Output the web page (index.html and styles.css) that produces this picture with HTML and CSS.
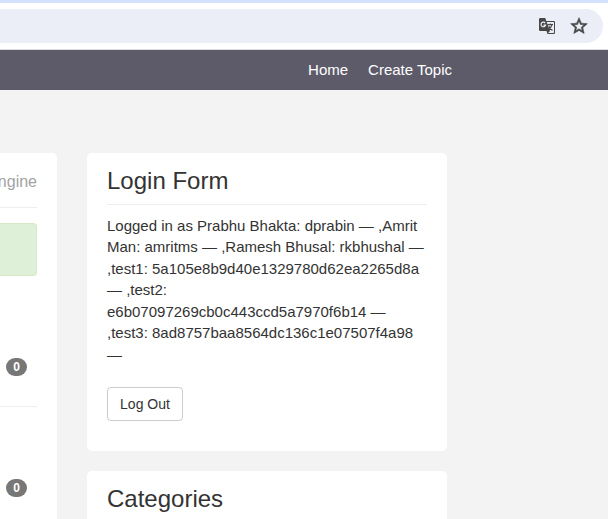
FILE: index.html
```html
<!DOCTYPE html>
<html lang="en">
<head>
<meta charset="utf-8">
<title>Forum</title>
<link rel="stylesheet" href="styles.css">
</head>
<body>
<div class="browser">
  <div class="omnibox">
    <svg class="icon" width="18" height="18" viewBox="0 0 18 18">
      <path d="M2.2 1H7.3L8.3 4H15.8Q17 4 17 5.2V15.8Q17 17 15.8 17H9.5L8.5 14H2.2Q1 14 1 12.8V2.2Q1 1 2.2 1Z" fill="#474747"/>
      <path d="M8.7 5H15.2Q16 5 16 5.8V15.2Q16 16 15.2 16H10.1L12 14Z" fill="#ebeef7"/>
      <path d="M7.2 6.1A2.3 2.3 0 1 0 7.5 8.2H5.5" fill="none" stroke="#ebeef7" stroke-width="1.2"/>
      <path d="M9.5 7.6H15M12.3 6.4V7.6M14 7.6Q13 11 10.8 12.5M11 9.2Q12 11.4 14.4 13.5" fill="none" stroke="#474747" stroke-width="1.1"/>
    </svg>
    <svg class="icon" width="20" height="20" viewBox="0 0 24 24">
      <path d="M22 9.24l-7.19-.62L12 2 9.19 8.63 2 9.24l5.46 4.73L5.82 21 12 17.27 18.18 21l-1.63-7.03L22 9.24zM12 15.4l-3.76 2.27 1-4.28-3.32-2.88 4.38-.38L12 6.1l1.71 4.04 4.38.38-3.32 2.88 1 4.28L12 15.4z" fill="#474747" stroke="#474747" stroke-width=".7"/>
    </svg>
  </div>
</div>
<nav class="navbar"><a>Home</a><a>Create Topic</a></nav>
<div class="columns">
  <main class="card main">
    <h4 class="tagline">ngine</h4>
    <hr>
    <div class="alert"></div>
    <div class="topic first"><span class="badge">0</span></div>
    <div class="topic"><span class="badge">0</span></div>
  </main>
  <aside class="sidebar">
    <section class="card login">
      <h3>Login Form</h3>
      <hr>
      <p>Logged in as Prabhu Bhakta: dprabin — ,Amrit Man: amritms — ,Ramesh Bhusal: rkbhushal — ,test1: 5a105e8b9d40e1329780d62ea2265d8a — ,test2: e6b07097269cb0c443ccd5a7970f6b14 — ,test3: 8ad8757baa8564dc136c1e07507f4a98 —</p>
      <button class="logout">Log Out</button>
    </section>
    <section class="card categories">
      <h3>Categories</h3>
    </section>
  </aside>
</div>
</body>
</html>
```
FILE: styles.css
```css
* { box-sizing: border-box; }
body {
  margin: 0;
  height: 519px;
  overflow: hidden;
  background: #f3f3f3;
  color: #333;
  font: 15px/21.43px "Liberation Sans", Arial, sans-serif;
}
.browser {
  height: 50px;
  padding-top: 6px;
  background: #fff;
  border-top: 3px solid #d3e3fd;
  border-bottom: 1px solid #dcdce0;
}
.omnibox {
  display: flex;
  justify-content: flex-end;
  align-items: center;
  gap: 13px;
  height: 34px;
  margin-right: 5px;
  padding-right: 14px;
  border-radius: 0 17px 17px 0;
  background: #ebeef7;
}
.icon { display: block; }
.navbar {
  display: flex;
  justify-content: flex-end;
  gap: 20px;
  height: 40px;
  padding: 9px 156px 0 0;
  background: #5d5b6a;
  color: #fff;
}
.columns {
  display: flex;
  gap: 30px;
  height: 429px;
  padding-top: 63px;
}
.card {
  background: #fff;
  border-radius: 5px;
}
hr {
  height: 1px;
  margin: 0;
  border: 0;
  background: #eee;
}
.main {
  width: 57px;
  height: 366px;
  padding: 18px 20px 0 0;
  border-radius: 0 5px 0 0;
}
.tagline {
  display: flex;
  justify-content: flex-end;
  height: 36px;
  margin: 0;
  color: #a3a3a3;
  font-size: 16px;
  font-weight: 400;
  white-space: nowrap;
}
.alert {
  height: 53px;
  margin-top: 15px;
  background: #dff0d8;
  border: 1px solid #d6e9c6;
  border-left: 0;
  border-radius: 0 4px 4px 0;
}
.topic {
  display: flex;
  justify-content: flex-end;
  height: 112px;
  padding: 72px 10px 0 0;
}
.topic.first {
  height: 131px;
  padding-top: 82px;
  border-bottom: 1px solid #eee;
}
.badge {
  width: 21px;
  height: 18px;
  border-radius: 10px;
  background: #777;
  color: #fff;
  font-size: 12px;
  font-weight: 700;
  line-height: 18px;
  text-align: center;
}
.sidebar { width: 360px; }
.login, .categories { padding: 15px 20px 0; }
.login { height: 298px; margin-bottom: 20px; }
.categories { height: 48px; padding-bottom: 0; border-radius: 5px 5px 0 0; }
.categories h3 { height: 33px; }
h3 {
  height: 36px;
  margin: 0;
  font-size: 24px;
  font-weight: 400;
  line-height: 26px;
}
p { margin: 10px 0 22px; }
.logout {
  display: block;
  width: 76px;
  height: 34px;
  padding: 0;
  background: #fff;
  border: 1px solid #ccc;
  border-radius: 4px;
  color: #333;
  font: 14px/20px "Liberation Sans", Arial, sans-serif;
}
```
